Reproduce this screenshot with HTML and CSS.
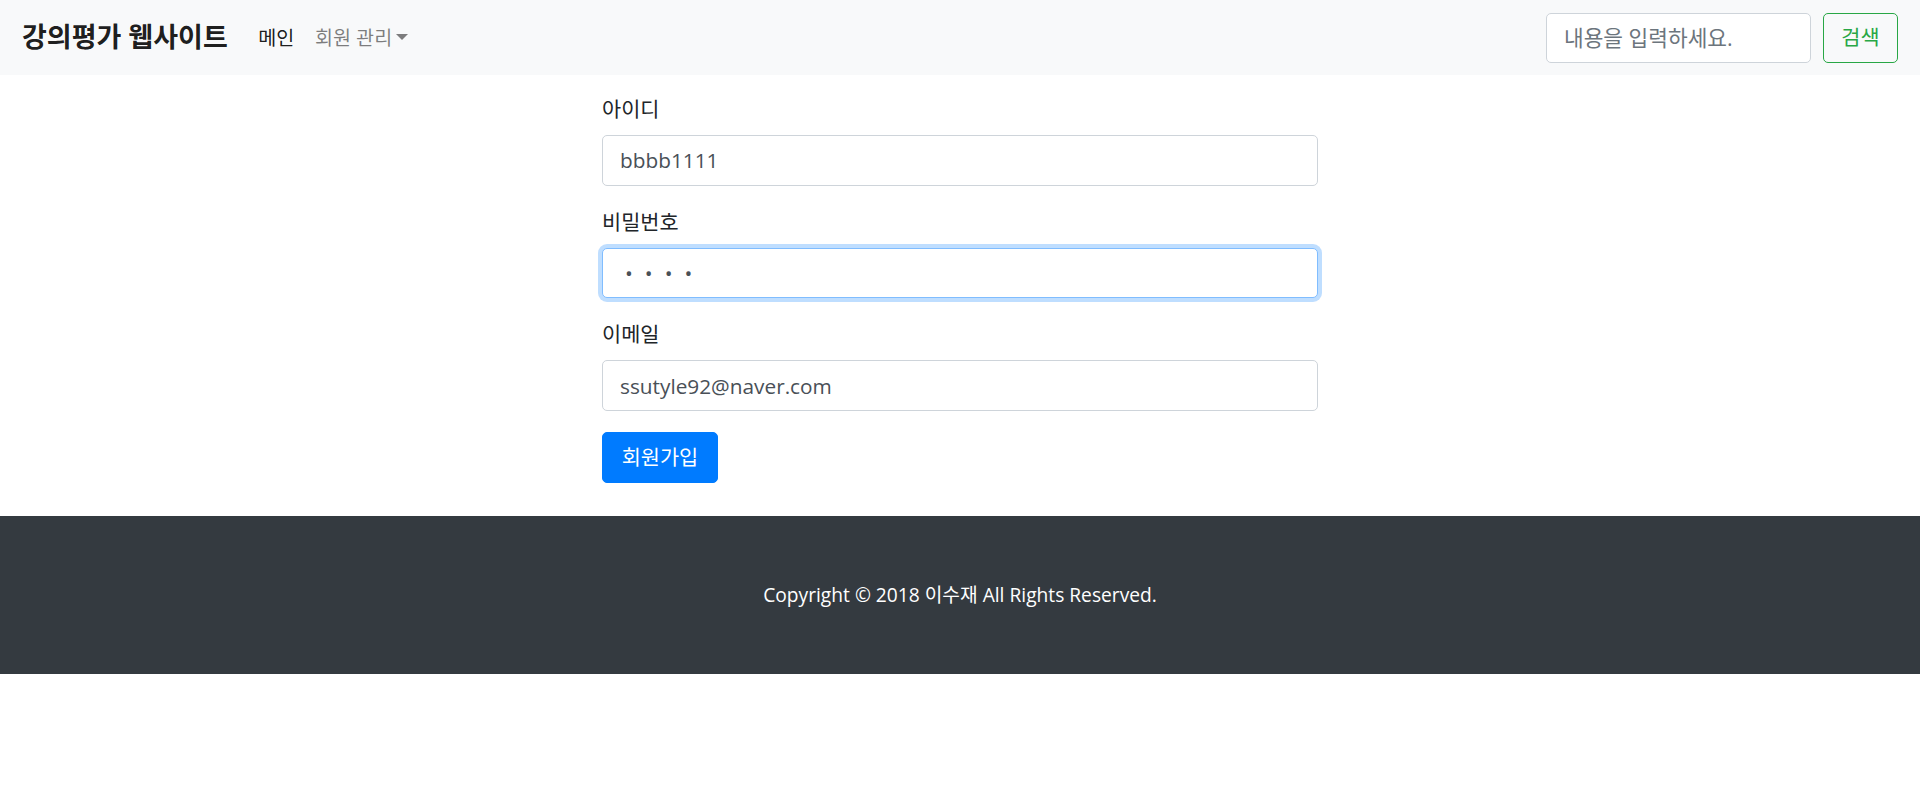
FILE: index.html
```html
<!DOCTYPE html>
<html lang="ko">
<head>
<meta charset="utf-8">
<title>강의평가 웹사이트</title>
<link rel="stylesheet" href="styles.css">
</head>
<body>
<nav class="navbar">
  <a class="brand" href="#">강의평가 웹사이트</a>
  <ul class="nav">
    <li><a class="nav-link active" href="#">메인</a></li>
    <li><a class="nav-link dropdown" href="#">회원 관리<span class="caret"></span></a></li>
  </ul>
  <form class="search">
    <input class="search-input" type="search" placeholder="내용을 입력하세요.">
    <button class="btn-search" type="button">검색</button>
  </form>
</nav>
<main class="container">
  <form class="join">
    <div class="form-group">
      <label class="label">아이디</label>
      <input class="form-control" type="text" value="bbbb1111">
    </div>
    <div class="form-group">
      <label class="label">비밀번호</label>
      <input class="form-control focused pw" type="password" value="1234">
    </div>
    <div class="form-group">
      <label class="label">이메일</label>
      <input class="form-control" type="email" value="ssutyle92@naver.com">
    </div>
    <button class="btn-primary" type="button">회원가입</button>
  </form>
</main>
<footer class="footer">Copyright © 2018 이수재 All Rights Reserved.</footer>
</body>
</html>
```
FILE: styles.css
```css
* { box-sizing: border-box; }
html, body { margin: 0; padding: 0; }
body {
  font-family: "Open Sans", "Noto Sans CJK KR", sans-serif;
  font-size: 20.8px;
  line-height: 1.5;
  color: #212529;
  background: #fff;
}
.navbar {
  display: flex;
  align-items: center;
  height: 75px;
  padding: 0 22px;
  background: #f8f9fa;
}
.brand {
  font-size: 27px;
  font-weight: 700;
  color: rgba(0,0,0,.9);
  text-decoration: none;
  margin-right: 20px;
  line-height: 1.5;
}
.nav {
  display: flex;
  list-style: none;
  margin: 0;
  padding: 0;
}
.nav-link {
  display: flex;
  align-items: center;
  padding: 8px 10.4px;
  font-size: 19.6px;
  color: rgba(0,0,0,.5);
  text-decoration: none;
}
.nav-link.active { color: rgba(0,0,0,.9); }
.caret {
  display: inline-block;
  width: 0;
  height: 0;
  margin-left: 4px;
  border-top: 6px solid rgba(0,0,0,.5);
  border-left: 6px solid transparent;
  border-right: 6px solid transparent;
}
.search {
  display: flex;
  align-items: center;
  margin: 0 0 0 auto;
}
.search-input {
  width: 265px;
  height: 50px;
  padding: 0 17px;
  font: inherit;
  font-size: 21.4px;
  color: #495057;
  background: #fff;
  border: 1px solid #ced4da;
  border-radius: 5px;
  outline: none;
}
.search-input::placeholder { color: #6c757d; opacity: 1; }
.btn-search {
  width: 75px;
  height: 50px;
  margin-left: 12px;
  padding: 0;
  font: inherit;
  font-size: 20.8px;
  color: #28a745;
  background: transparent;
  border: 1px solid #28a745;
  border-radius: 5px;
}
.container {
  width: 716px;
  margin: 0 auto;
  padding-top: 19px;
}
.form-group { margin-bottom: 21.2px; }
.label {
  display: block;
  margin-bottom: 10px;
  line-height: 31px;
}
.form-control {
  display: block;
  width: 100%;
  height: 50.5px;
  padding: 0 17px;
  font: inherit;
  font-size: 20.8px;
  color: #495057;
  background: #fff;
  border: 1px solid #ced4da;
  border-radius: 5px;
  outline: none;
}
.form-control.focused {
  border-color: #80bdff;
  box-shadow: 0 0 0 4px rgba(0,123,255,.25);
}
.pw { letter-spacing: 12px; padding-left: 22px; }
.btn-primary {
  display: block;
  width: 116px;
  height: 51px;
  padding: 0;
  font: inherit;
  font-size: 20.8px;
  color: #fff;
  background: #007bff;
  border: 1px solid #007bff;
  border-radius: 5px;
}
.footer {
  margin-top: 32.5px;
  padding: 63px 0;
  line-height: 32px;
  font-size: 19.2px;
  text-align: center;
  color: #fff;
  background: #343a40;
}
```
